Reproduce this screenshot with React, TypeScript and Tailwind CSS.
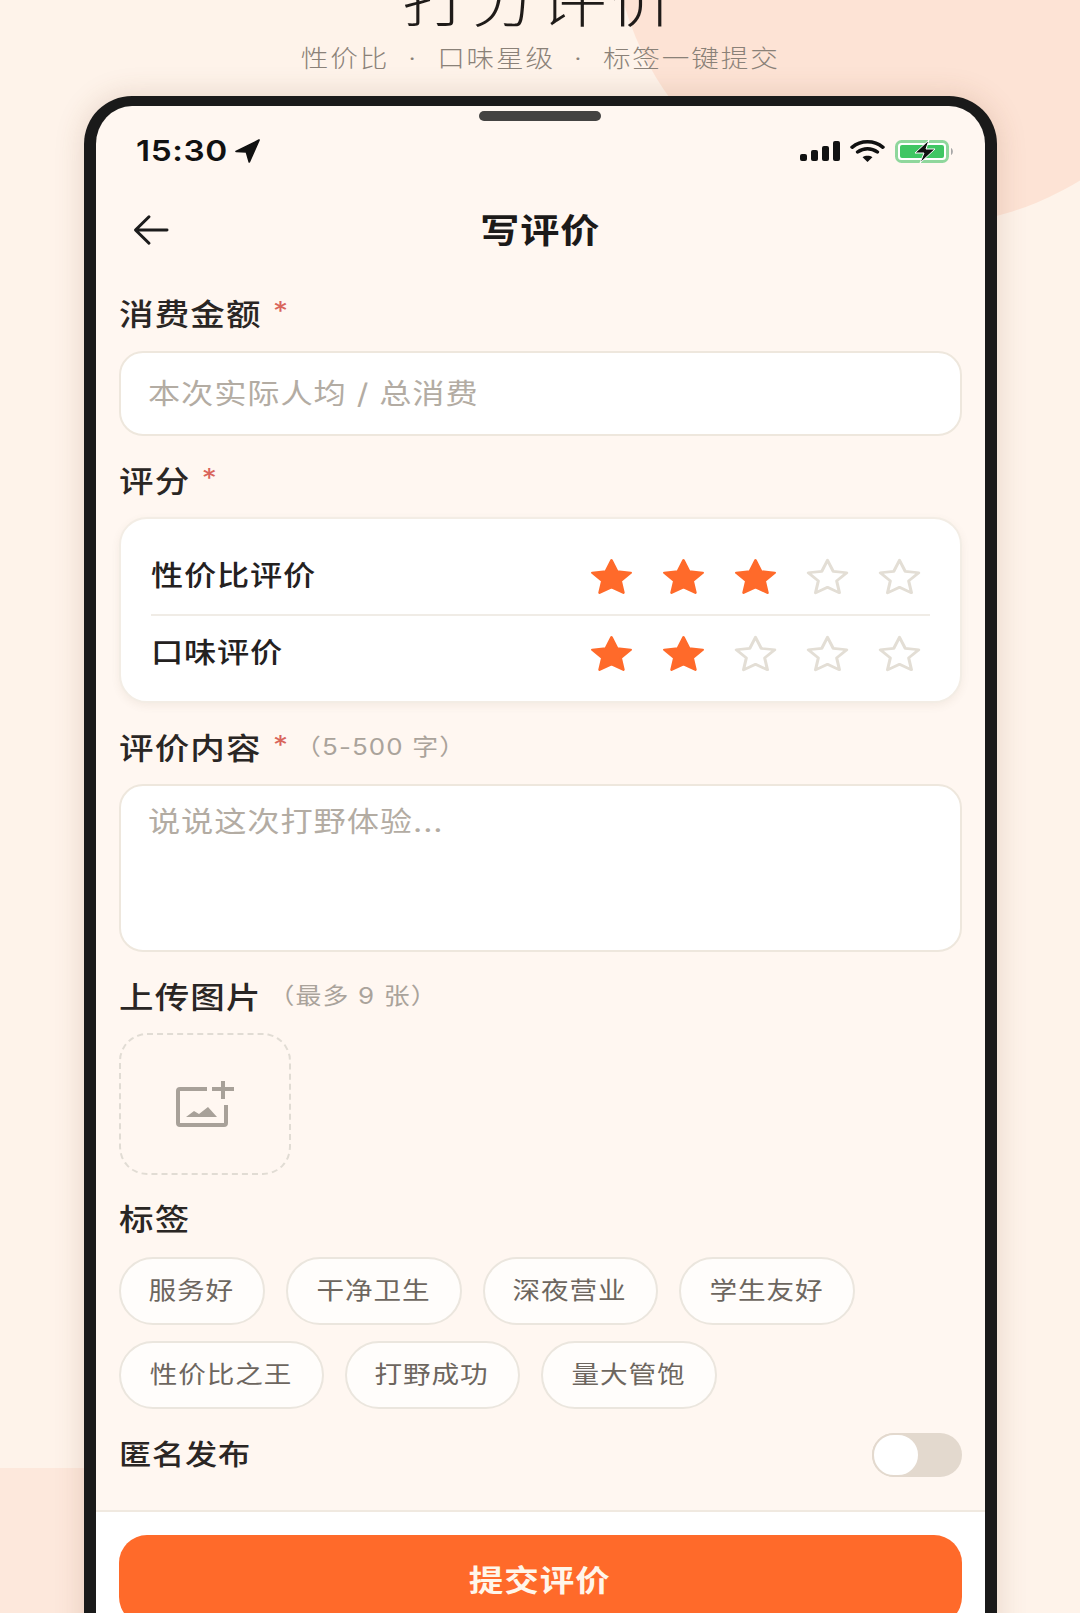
import React from "react";

const cjk = "font-['Inter','Noto_Sans_CJK_SC',sans-serif]";

function Star({ on }: { on: boolean }) {
  const d = "M22 2.500l5.600 12.700 13.200 1.600-9.800 9.200 2.700 13.500L22 33.200 10.300 39.500 13 26l-9.800-9.200 13.200-1.600z";
  return (
    <svg width="45" height="37" viewBox="0 0 44 42" preserveAspectRatio="none" className="shrink-0">
      <path d={d} fill={on ? "#ff6a2a" : "none"} stroke={on ? "#ff6a2a" : "#e3ded5"} strokeWidth={on ? 2.500 : 3} strokeLinejoin="round" />
    </svg>
  );
}

function Stars({ n }: { n: number }) {
  return (
    <div className="flex gap-[27px]">
      {[0, 1, 2, 3, 4].map((i) => (
        <Star key={i} on={i < n} />
      ))}
    </div>
  );
}

function Label({ text, req, hint, className }: { text: string; req?: boolean; hint?: string; className?: string }) {
  return (
    <div className={"h-[40px] " + (className ?? "")}>
      <div className="flex items-center h-[40px] origin-left scale-x-[1.15] whitespace-nowrap">
        <span className="text-[30px] leading-[40px] font-medium tracking-[1px] text-[#2a2624]">{text}</span>
        {req && <span className="ml-[10px] text-[26px] leading-[40px] text-[#d9655c] -translate-y-[3px]">*</span>}
        {hint && <span className="ml-[6px] text-[22.500px] leading-[40px] tracking-[1px] text-[#aaa39b] -translate-y-[1px]">{hint}</span>}
      </div>
    </div>
  );
}

function Tag({ text, w }: { text: string; w: string }) {
  return (
    <div className={"h-[68px] rounded-full bg-white/70 border-2 border-[#ebe6de] flex items-center justify-center text-[#6d665f] " + w}>
      <span className="inline-block scale-x-[1.15] text-[24px] tracking-[0.800px] whitespace-nowrap">{text}</span>
    </div>
  );
}

function RowName({ text }: { text: string }) {
  return <span className="inline-block origin-left scale-x-[1.15] text-[28px] leading-[37px] font-medium tracking-[0.700px] text-[#24211f] whitespace-nowrap">{text}</span>;
}

export default function App() {
  return (
    <div className={"relative w-[1080px] h-[1613px] overflow-hidden bg-[#fef3ea] " + cjk}>
      <div className="absolute left-[612px] top-[-388px] w-[614px] h-[614px] rounded-full bg-[#fde3d5]" />
      <div className="absolute left-[-400px] top-[1468px] w-[1400px] h-[500px] rounded-full bg-[#fde8dc]" />
      <div className="relative flex flex-col items-center">
        <div className="mt-[-27px] h-[56px] scale-x-[1.15] text-[58px] leading-[56px] font-light tracking-[2px] text-[#1f1b19] whitespace-nowrap">打分评价</div>
        <div className="mt-[12px] h-[36px] scale-x-[1.15] text-[24px] leading-[36px] font-light tracking-[1.600px] text-[#8a8178] whitespace-pre">性价比  ·  口味星级  ·  标签一键提交</div>
        <div className="mt-[19px] w-[913px] h-[1600px] shrink-0 rounded-t-[48px] border-x-[12px] border-t-[10px] border-[#1a1a1a] bg-[#fff7f1] shadow-[0_0_30px_rgba(120,70,40,0.18)] overflow-hidden flex flex-col">
          <div className="mt-[5px] mx-auto w-[122px] h-[10px] rounded-full bg-[#444342]" />
          <div className="mt-[10px] h-[40px] flex items-center justify-between pl-[40px] pr-[31px]">
            <div className="flex items-center gap-[6px] origin-left scale-x-[1.15] text-[29px] font-semibold tracking-[0.500px] text-[#111] font-['Inter',sans-serif]">
              15:30
              <svg width="22" height="24" viewBox="0 0 22 24"><path d="M21 1L1 12.500l9 .5L12.500 23z" fill="#111" stroke="#111" strokeWidth="1.500" strokeLinejoin="round" /></svg>
            </div>
            <div className="flex items-center gap-[10px]">
              <svg width="40" height="20" viewBox="0 0 40 20" fill="#111">
                <rect x="0" y="13" width="7" height="7" rx="2" /><rect x="11" y="9" width="7" height="11" rx="2" /><rect x="22" y="5" width="7" height="15" rx="2" /><rect x="33" y="0" width="7" height="20" rx="2" />
              </svg>
              <svg width="35" height="23" viewBox="0 0 32 24" preserveAspectRatio="none" fill="none" stroke="#111" strokeWidth="3.500" strokeLinecap="round">
                <path d="M2 7.500C10 0 22 0 30 7.500" /><path d="M7 12.500c5.500-4.500 12.500-4.500 18 0" />
                <path d="M16 23l-4.500-5c2.500-2 6.500-2 9 0z" fill="#111" stroke="none" />
              </svg>
              <svg width="59" height="23" viewBox="0 0 59 23">
                <rect x="1.500" y="1.500" width="51" height="20" rx="5" fill="#fff" stroke="#8fd79c" strokeWidth="3" />
                <rect x="5" y="5" width="44" height="13" rx="2" fill="#3fc663" />
                <path d="M56 8c2.500 1 2.500 6 0 7z" fill="#a8a8a8" />
                <path d="M34 0L20 13h9l-4 10 15-14h-9z" fill="#111" stroke="#fff" strokeWidth="1" />
              </svg>
            </div>
          </div>
          <div className="relative mt-[38px] h-[44px] flex items-center justify-center">
            <svg className="absolute left-[37px] top-[5px]" width="36" height="32" viewBox="0 0 36 34" preserveAspectRatio="none" fill="none" stroke="#1c1c1c" strokeWidth="3" strokeLinecap="round" strokeLinejoin="round">
              <path d="M34 17H3M16 3L2.500 17 16 31" />
            </svg>
            <span className="inline-block scale-x-[1.15] text-[34px] leading-[44px] font-bold tracking-[0.800px] text-[#1c1a19]">写评价</span>
          </div>
          <div className="px-[23px] flex flex-col">
            <Label className="mt-[41px]" text="消费金额" req />
            <div className="mt-[17px] h-[85px] rounded-[24px] bg-white border-2 border-[#eee7dd] flex items-center px-[27px] text-[#b3aca3]">
              <span className="inline-block origin-left scale-x-[1.15] text-[28px] tracking-[0.800px] whitespace-nowrap">本次实际人均 / 总消费</span>
            </div>
            <Label className="mt-[25px]" text="评分" req />
            <div className="mt-[16px] h-[186px] rounded-[28px] bg-white border-2 border-[#f3ede5] shadow-[0_3px_8px_rgba(120,90,60,0.08)] px-[30px] flex flex-col">
              <div className="mt-[39px] pb-[19px] flex items-center justify-between pr-[8px] border-b-2 border-[#f0ece6]">
                <RowName text="性价比评价" />
                <Stars n={3} />
              </div>
              <div className="pt-[19px] flex items-center justify-between pr-[8px]">
                <RowName text="口味评价" />
                <Stars n={2} />
              </div>
            </div>
            <Label className="mt-[25px]" text="评价内容" req hint="（5-500 字）" />
            <div className="mt-[16px] h-[168px] rounded-[24px] bg-white border-2 border-[#eee7dd] px-[27px] pt-[16px] text-[#b3aca3]">
              <span className="inline-block origin-left scale-x-[1.15] text-[28px] leading-[40px] tracking-[0.800px] whitespace-nowrap">说说这次打野体验...</span>
            </div>
            <Label className="mt-[25px]" text="上传图片" hint="（最多 9 张）" />
            <div className="mt-[16px] w-[172px] h-[142px] rounded-[28px] border-2 border-dashed border-[#e1dcd4] flex items-center justify-center">
              <svg width="60" height="46" viewBox="0 0 60 46" fill="none">
                <path d="M32 8H5a2 2 0 0 0-2 2V42a2 2 0 0 0 2 2h44a2 2 0 0 0 2-2V24" stroke="#a8a199" strokeWidth="4" />
                <path d="M37 8h22M48 0v18" stroke="#a8a199" strokeWidth="4" />
                <path d="M11 36l8-6 5 3 9-7 9 10z" fill="#a8a199" />
              </svg>
            </div>
            <Label className="mt-[24px]" text="标签" />
            <div className="mt-[18px] flex gap-[21px]">
              <Tag text="服务好" w="w-[146px]" />
              <Tag text="干净卫生" w="w-[176px]" />
              <Tag text="深夜营业" w="w-[175px]" />
              <Tag text="学生友好" w="w-[176px]" />
            </div>
            <div className="mt-[16px] flex gap-[21px]">
              <Tag text="性价比之王" w="w-[205px]" />
              <Tag text="打野成功" w="w-[175px]" />
              <Tag text="量大管饱" w="w-[176px]" />
            </div>
            <div className="mt-[24px] h-[44px] flex items-center justify-between">
              <span className="inline-block origin-left scale-x-[1.15] text-[28px] font-medium tracking-[0.700px] text-[#2a2624] whitespace-nowrap">匿名发布</span>
              <div className="w-[90px] h-[44px] rounded-full bg-[#e3d9ce] flex">
                <div className="w-[48px] h-[44px] rounded-full bg-white border-2 border-[#e3d9ce]" />
              </div>
            </div>
          </div>
          <div className="mt-[33px] flex-1 bg-white border-t-2 border-[#f0e9e0] px-[23px] pt-[23px]">
            <div className="h-[90px] rounded-[28px] bg-[#ff6a2a] flex items-center justify-center text-[#fff6ea]">
              <span className="inline-block scale-x-[1.15] text-[30px] font-bold tracking-[0.900px] whitespace-nowrap">提交评价</span>
            </div>
          </div>
        </div>
      </div>
    </div>
  );
}
